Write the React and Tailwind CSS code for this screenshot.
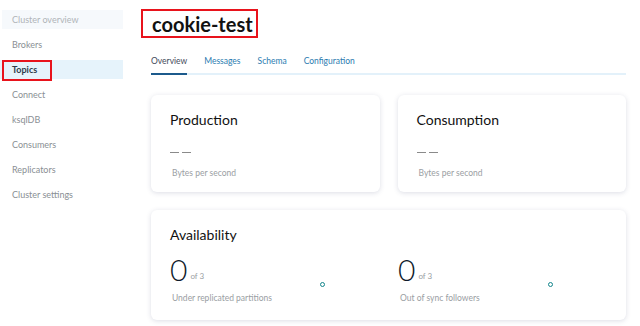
import React from 'react';

const navItems = [
  'Cluster overview',
  'Brokers',
  'Topics',
  'Connect',
  'ksqlDB',
  'Consumers',
  'Replicators',
  'Cluster settings',
];

const tabs = ['Overview', 'Messages', 'Schema', 'Configuration'];

const font = { fontFamily: 'Lato, "Noto Sans", sans-serif' };

const Sidebar = () => (
  <aside className="w-[123px] shrink-0 pt-[10px]">
    {navItems.map((item) => {
      if (item === 'Topics') {
        return (
          <div key={item} className="relative h-[19px] mb-[6px] bg-[#e6f3fb] flex items-center pl-3">
            <span className="text-[9px] font-bold text-[#2f3b4a]">{item}</span>
            <div className="absolute left-[2px] top-0 w-[50px] h-[21px] border-2 border-[#e8131c]" />
          </div>
        );
      }
      return (
        <div
          key={item}
          className={`h-[19px] mb-[6px] flex items-center pl-3 ${item === 'Cluster overview' ? 'bg-[#f6f9fc] ml-[2px]' : ''}`}
        >
          <span className={`text-[9px] ${item === 'Cluster overview' ? 'text-[#b0b4b8] -ml-[2px]' : 'text-[#8a8f94]'}`}>{item}</span>
        </div>
      );
    })}
  </aside>
);

const Card = ({ title, className, children }) => (
  <div className={`bg-white rounded-md shadow-[0_1px_5px_rgba(60,64,110,0.18)] ${className}`}>
    <div className="pl-[19px] pt-[15px]">
      <h2 className="text-[14px] text-[#111] leading-[20px]">{title}</h2>
      {children}
    </div>
  </div>
);

const Dot = () => (
  <div className="w-[5px] h-[5px] rounded-full border-[1.5px] border-[#13858b]" />
);

const Metric = ({ label }) => (
  <div className="flex-1 relative">
    <div className="flex items-end">
      <span className="text-[30px] font-light leading-[30px] text-[#0f1a2a]">0</span>
      <span className="text-[8px] text-[#9a9ea3] ml-[3px] mb-[2px]">of 3</span>
    </div>
    <div className="text-[8.5px] text-[#9a9ea3] mt-[8px] ml-[2px]">{label}</div>
    <div className="absolute top-[28px] left-[150px]">
      <Dot />
    </div>
  </div>
);

const Rate = () => (
  <>
    <div className="flex gap-[3px] mt-[22px]">
      <div className="w-[9px] h-[1.5px] bg-[#8a8a8a]" />
      <div className="w-[9px] h-[1.5px] bg-[#8a8a8a]" />
    </div>
    <div className="text-[8.5px] text-[#9a9ea3] mt-[14px] ml-[2px]">Bytes per second</div>
  </>
);

export default function App() {
  return (
    <div className="w-[640px] h-[326px] bg-white flex overflow-hidden" style={font}>
      <Sidebar />
      <main className="flex-1 pl-[28px] pr-[14px]">
        <div className="pt-[9px]">
          <div className="-ml-[10px] w-[117px] h-[29px] border-2 border-[#e8131c] flex items-center pl-[9px]">
            <h1 className="text-[20px] font-bold text-[#111] leading-none whitespace-nowrap">cookie-test</h1>
          </div>
        </div>
        <nav className="mt-[17px] flex border-b-2 border-[#e3f1fa]">
          {tabs.map((t) => (
            <div
              key={t}
              className={`text-[8.5px] pb-[5px] mr-[17px] -mb-[2px] ${t === 'Overview' ? 'text-[#3f4a5a] border-b-2 border-[#1c5a8c]' : 'text-[#2b7bb0]'}`}
            >
              {t}
            </div>
          ))}
        </nav>
        <div className="mt-[20px] flex gap-[18px]">
          <Card title="Production" className="flex-1 h-[97px]">
            <Rate />
          </Card>
          <Card title="Consumption" className="flex-1 h-[97px]">
            <Rate />
          </Card>
        </div>
        <Card title="Availability" className="mt-[18px] h-[110px]">
          <div className="flex mt-[9px]">
            <Metric label="Under replicated partitions" />
            <Metric label="Out of sync followers" />
          </div>
        </Card>
      </main>
    </div>
  );
}
